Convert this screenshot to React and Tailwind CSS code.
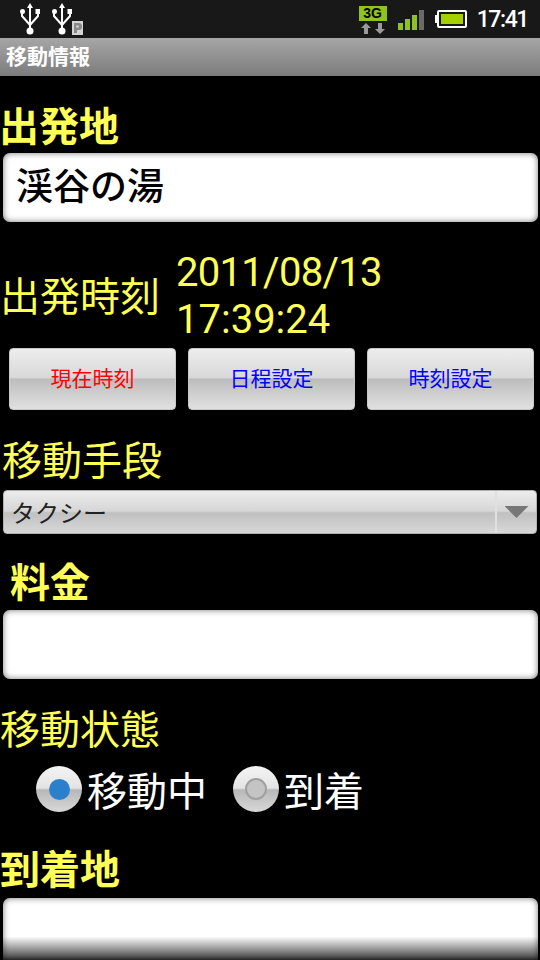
import React from 'react';

const cjk = "font-['Noto_Sans_CJK_JP','Noto_Sans_CJK_SC',sans-serif]";

const UsbIcon = () => (
    <svg width="20" height="32" viewBox="0 0 20 32" fill="none" className="block">
        <path d="M10 0 L13 5 L7 5 Z" fill="#fff" />
        <path d="M10 4 V27" stroke="#fff" strokeWidth="2" />
        <path d="M2 10 V13 L10 22" stroke="#fff" strokeWidth="2" />
        <path d="M18 10 V13 L10 22" stroke="#fff" strokeWidth="2" />
        <circle cx="2.5" cy="8.5" r="2.5" fill="#fff" />
        <rect x="15.5" y="6" width="5" height="5" fill="#fff" />
        <circle cx="10" cy="28" r="3.5" fill="#fff" />
    </svg>
);

const ParkIcon = () => (
    <svg width="11" height="14" viewBox="0 0 11 14" className="block">
        <rect width="11" height="14" fill="#d4d4d4" />
        <path d="M2 2 H7 Q10 2 10 5.5 Q10 9 7 9 H5 V12 H2 Z" fill="#8a8a8a" />
        <circle cx="5.5" cy="5.5" r="1.2" fill="#d4d4d4" />
    </svg>
);

const StatusBar = () => (
    <div className="h-[38px] bg-[#181818] flex items-center pl-[20px] pr-[12px]">
        <div className="flex items-end gap-[12px] mt-[-1px]">
            <UsbIcon />
            <div className="flex items-end">
                <UsbIcon />
                <ParkIcon />
            </div>
        </div>
        <div className="ml-auto flex items-center">
            <div className="w-[28px] flex flex-col items-center mt-[1px]">
                <div className="w-[28px] h-[15px] bg-[#8fc31f] text-black text-[14px] leading-[15px] font-bold text-center font-['Liberation_Sans',sans-serif]">3G</div>
                <svg width="26" height="11" viewBox="0 0 26 11" className="block mt-[2px]">
                    <path d="M6 0 L11 5 H8 V11 H4 V5 H1 Z" fill="#9a9a9a" />
                    <path d="M20 11 L25 6 H22 V0 H18 V6 H15 Z" fill="#9a9a9a" />
                </svg>
            </div>
            <svg width="26" height="20" viewBox="0 0 26 20" className="block ml-[11px] mt-[1px]">
                <rect x="0" y="13" width="5" height="7" fill="#8fc31f" />
                <rect x="7" y="9" width="5" height="11" fill="#8fc31f" />
                <rect x="14" y="5" width="5" height="15" fill="#8fc31f" />
                <rect x="21" y="0" width="5" height="20" fill="#6a6a6a" />
            </svg>
            <svg width="32" height="18" viewBox="0 0 32 18" className="block ml-[11px]">
                <rect x="0" y="5" width="3" height="8" fill="#fff" />
                <rect x="3" y="1" width="28" height="16" rx="1" fill="none" stroke="#fff" strokeWidth="2" />
                <rect x="6" y="4" width="22" height="10" fill="#a4d000" />
            </svg>
            <span className="ml-[10px] text-white text-[23px] leading-none font-medium tracking-[-1.4px] font-['Roboto',sans-serif]">17:41</span>
        </div>
    </div>
);

const Label = ({ children, bold, className = '' }) => (
    <div className={`text-[40px] leading-[46px] text-[#ffff55] whitespace-nowrap ${bold ? 'font-bold' : 'font-normal'} ${className}`}>
        {children}
    </div>
);

const TextBox = ({ children, className = '' }) => (
    <div className={`mx-[3px] w-[535px] h-[69px] rounded-[7px] bg-white flex items-center pl-[13px] pb-[5px] text-black text-[37px] font-medium shadow-[inset_0_0_6px_rgba(0,0,0,0.55)] ${className}`}>
        {children}
    </div>
);

const Button = ({ children, color }) => (
    <button className={`w-[167px] h-[62px] pb-[2px] rounded-[4px] text-[21px] ${color} border border-[#c8c8c8] bg-[linear-gradient(to_bottom,#ededed_0%,#d8d8d8_48%,#bcbcbc_50%,#cfcfcf_75%,#e0e0e0_100%)]`}>
        {children}
    </button>
);

const Radio = ({ checked, children }) => (
    <div className="flex items-center gap-[5px]">
        <div className="w-[46px] h-[46px] rounded-full flex items-center justify-center bg-[linear-gradient(to_bottom,#f4f4f4_0%,#e4e4e4_48%,#b8b8b8_52%,#d8d8d8_100%)]">
            {checked ? (
                <div className="w-[21px] h-[21px] rounded-full bg-[#2b80cc]" />
            ) : (
                <div className="w-[22px] h-[22px] rounded-full border-2 border-[#a0a0a0] bg-[#c4c4c4]" />
            )}
        </div>
        <span className="text-[40px] leading-[46px] text-white">{children}</span>
    </div>
);

export default function App() {
    return (
        <div className={`w-[540px] h-[960px] overflow-hidden bg-black ${cjk}`}>
            <StatusBar />
            <div className="h-[38px] flex items-center pl-[6px] pb-[3px] text-white text-[21px] font-bold bg-[linear-gradient(to_bottom,#a6a6a6,#7c7c7c)]">
                移動情報
            </div>

            <Label bold className="mt-[25px] ml-[-1px]">出発地</Label>
            <TextBox className="mt-[6px]">渓谷の湯</TextBox>

            <div className="flex items-center mt-[27px]">
                <Label className="w-[176px] mb-[4px]">出発時刻</Label>
                <div className="text-[40px] leading-[47px] text-[#ffff55] font-['Roboto',sans-serif]">
                    <div className="tracking-[-0.7px]">2011/08/13</div>
                    <div>17:39:24</div>
                </div>
            </div>

            <div className="flex gap-[12px] pl-[9px] mt-[5px]">
                <Button color="text-[#ff0000]">現在時刻</Button>
                <Button color="text-[#0000ff]">日程設定</Button>
                <Button color="text-[#0000ff]">時刻設定</Button>
            </div>

            <Label className="mt-[25px] pl-[2px]">移動手段</Label>
            <div className="mx-[3px] w-[534px] h-[44px] mt-[9px] rounded-[4px] flex overflow-hidden border border-[#b0b0b0] bg-[linear-gradient(to_bottom,#ececec_0%,#d6d6d6_48%,#c0c0c0_52%,#d8d8d8_100%)]">
                <div className="flex-1 flex items-center pl-[7px] text-[24px] text-[#222]">タクシー</div>
                <div className="w-[41px] flex items-center justify-center border-l-2 border-[#e0e0e0]">
                    <div className="w-[24px] h-[12px] bg-[#777] [clip-path:polygon(0_0,100%_0,50%_100%)]" />
                </div>
            </div>

            <Label bold className="mt-[23px] pl-[10px]">料金</Label>
            <TextBox className="mt-[7px]" />

            <Label className="mt-[25px]">移動状態</Label>
            <div className="flex gap-[26px] pl-[36px] mt-[16px]">
                <Radio checked>移動中</Radio>
                <Radio>到着</Radio>
            </div>

            <Label bold className="mt-[32px]">到着地</Label>
            <div className="mx-[3px] w-[535px] h-[62px] mt-[8px] rounded-t-[7px] bg-[linear-gradient(to_bottom,#fff_0%,#fff_62%,#555_95%,#333_100%)] shadow-[inset_0_0_6px_rgba(0,0,0,0.55)]" />
        </div>
    );
}
